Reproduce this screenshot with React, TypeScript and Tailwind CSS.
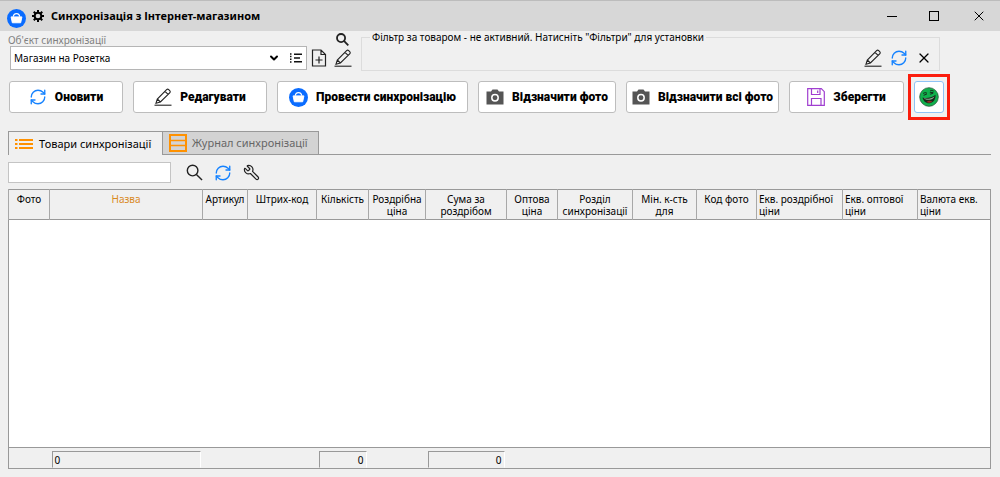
import type { ReactNode } from 'react';
import { ChevronDown, RefreshCw, Wrench, X } from 'lucide-react';

type Column = { title: string; width: string; align?: string; sum?: string };

const columns: Column[] = [
  { title: 'Фото', width: 'w-[41px]' },
  { title: 'Назва', width: '', align: 'text-center text-[#d98a1f]', sum: '0' },
  { title: 'Артикул', width: 'w-[45px]' },
  { title: 'Штрих-код', width: 'w-[69px]' },
  { title: 'Кількість', width: 'w-[52px]', sum: '0' },
  { title: 'Роздрібна ціна', width: 'w-[57px]' },
  { title: 'Сума за роздрібом', width: 'w-[81px]', sum: '0' },
  { title: 'Оптова ціна', width: 'w-[51px]' },
  { title: 'Розділ синхронізації', width: 'w-[75px]' },
  { title: 'Мін. к-сть для', width: 'w-[64px]' },
  { title: 'Код фото', width: 'w-[60px]' },
  { title: 'Екв. роздрібної ціни', width: 'w-[86px]', align: 'text-left' },
  { title: 'Екв. оптової ціни', width: 'w-[75px]', align: 'text-left' },
  { title: 'Валюта екв. ціни', width: 'w-[73px]', align: 'text-left' },
];

function BagIcon({ className }: { className: string }) {
  return (
    <svg viewBox="0 0 20 20" className={className}>
      <circle cx="10" cy="10" r="10" fill="#0a6cff" />
      <path d="M4.3 8.3h11.4l-1.3 6.2H5.6z" fill="#fff" stroke="#fff" strokeLinejoin="round" />
      <path d="M6.6 8.2C6.8 5.6 8 4.8 10 4.8s3.2.8 3.4 3.4" fill="none" stroke="#fff" strokeWidth="1.3" />
    </svg>
  );
}

function GearIcon() {
  return (
    <svg viewBox="0 0 24 24" className="h-3 w-3" fill="none" stroke="#000">
      <circle cx="12" cy="12" r="6.7" strokeWidth="4" />
      <path
        d="M12 0v5M12 19v5M0 12h5M19 12h5M3.5 3.5 7 7M17 17l3.5 3.5M20.5 3.5 17 7M7 17l-3.5 3.5"
        strokeWidth="4"
      />
    </svg>
  );
}

function SearchIcon({ className }: { className: string }) {
  return (
    <svg viewBox="0 0 18 18" className={className} fill="none" stroke="#222">
      <circle cx="7" cy="7" r="5.6" />
      <path d="m11 11 6 6" />
    </svg>
  );
}

function PencilIcon() {
  return (
    <svg viewBox="0 0 18 18" className="h-[18px] w-[18px]" fill="none" stroke="#222" strokeWidth="1.1">
      <path d="M2 15.2 3.3 11 12.6 1.7c.7-.7 1.4-.7 2.1 0l1 1c.7.7.7 1.4 0 2.1L6.4 14zM3.3 11l3.1 3M11 3.3l3.1 3.1" />
      <path d="M.5 17.2h17" />
    </svg>
  );
}

function FilePlusIcon() {
  return (
    <svg viewBox="0 0 16 18" className="h-[18px] w-4" fill="none" stroke="#222" strokeWidth="1.2">
      <path d="M1.5 1H10l4.5 4.5V17h-13zM10 1v4.5h4.5M8 7.5v7M4.5 11h7" />
    </svg>
  );
}

function ListIcon() {
  return (
    <svg viewBox="0 0 18 12" className="h-3 w-[18px]" fill="none" stroke="#ff9100" strokeWidth="2">
      <path d="M0 2h2.5M0 6h2.5M0 10h2.5M4 2h14M4 6h14M4 10h14" />
    </svg>
  );
}

function DetailsIcon() {
  return (
    <svg viewBox="0 0 12 10" className="h-[10px] w-3" fill="none" stroke="#111" strokeWidth="1.5">
      <path d="M0 1h1.5M0 3.6h1.5M0 6.2h1.5M0 8.9h1.5M4 1.2h8M4 4.9h6M4 8.7h8" />
    </svg>
  );
}

function CameraIcon() {
  return (
    <svg viewBox="0 0 18 16" className="h-4 w-[18px]">
      <path d="M1 2.5h4L6.5.5h5L13 2.5h4.5v13H.5v-13z" fill="#555" />
      <circle cx="9" cy="8.8" r="3.2" fill="none" stroke="#fff" strokeWidth="1.5" />
    </svg>
  );
}

function SaveIcon() {
  return (
    <svg viewBox="0 0 18 18" className="h-[18px] w-[18px]" fill="none" stroke="#a03fd0" strokeWidth="1.2">
      <path d="M.7.7h13.6l3 3v13.6H.7zM4.5.7v5.8H13V.7M4.500 17.300v-6.800H14v6.800M10.700 2.500V5" />
    </svg>
  );
}

function LaughIcon() {
  return (
    <svg viewBox="0 0 20 20" className="h-5 w-5 shrink-0">
      <circle cx="10" cy="10" r="9.3" fill="#10b04c" stroke="#2c5b3b" strokeWidth=".8" />
      <path d="M3.5 10.500c4 1.200 9 .3 13-2.700.3 4.500-2 8-5.800 8.400-3.700.4-6.400-2-7.200-5.700z" fill="#16281b" />
      <path d="M4.800 11.300c3.700.9 7.500.2 10.800-1.900-.8 1.900-2.800 3-5.300 3.300-2.500.3-4.500-.2-5.500-1.400z" fill="#8fae95" />
      <path d="M7.500 15c1.500-1.400 4-1.700 5.800-.6-1.500 1.400-4 1.700-5.800.6z" fill="#8f2d24" />
      <path
        d="M4 6.800c.8-1.200 2.700-1.500 4-.5M4.600 8.300l3.200-1.200M10.800 5.800l3.400-.5M11 4.200c1-.9 2.400-1 3.600-.2M11.300 7.300l3-1.300"
        fill="none"
        stroke="#16281b"
      />
    </svg>
  );
}

function LogIcon() {
  return (
    <svg viewBox="0 0 18 18" className="h-[18px] w-[18px]" fill="none" stroke="#ff9100">
      <path d="M1 1h16v16H1z" strokeWidth="2" />
      <path d="M2 6.5h14M2 11.5h14" strokeWidth="1.5" />
    </svg>
  );
}

function ToolButton({ width, icon, children }: { width: string; icon: ReactNode; children: ReactNode }) {
  return (
    <button
      className={`flex h-8 items-center justify-center gap-2 rounded-[3px] border border-[#bdbdbd] bg-white font-[Roboto,sans-serif] text-[12px] font-black whitespace-nowrap ${width}`}
    >
      {icon}
      {children}
    </button>
  );
}

function IconButton({ label, children }: { label: string; children: ReactNode }) {
  return (
    <button aria-label={label} className="flex shrink-0 items-center justify-center">
      {children}
    </button>
  );
}

export default function App() {
  return (
    <div className="flex h-screen flex-col bg-[#f0f0f0] font-['Noto_Sans',sans-serif] text-[10px] leading-3 text-black">
      <header className="flex h-[31px] shrink-0 items-center border-t border-[#bcbcbc] bg-[#d7d7d7] pl-[7px]">
        <BagIcon className="mt-1 h-[19px] w-[19px]" />
        <span className="ml-[6px]">
          <GearIcon />
        </span>
        <h1 className="ml-[7px] flex-1 text-[11px] font-bold">Синхронізація з Інтернет-магазином</h1>
        <div className="flex items-center gap-8 pr-[13px]">
          <button aria-label="Згорнути" className="w-[10px] border-t border-black" />
          <button aria-label="Розгорнути" className="h-[10px] w-[10px] border border-black" />
          <IconButton label="Закрити">
            <X className="h-4 w-4" strokeWidth={1.5} />
          </IconButton>
        </div>
      </header>

      <div className="flex shrink-0 pl-2">
        <div className="w-[344px] pt-[2px]">
          <div className="flex items-center justify-between pr-[3px]">
            <label htmlFor="sync-object" className="text-[#808080]">
              Об'єкт синхронізації
            </label>
            <IconButton label="Пошук">
              <SearchIcon className="h-[13px] w-[13px] stroke-[2.500]" />
            </IconButton>
          </div>
          <div className="flex items-center pl-[2px]">
            <div className="flex h-6 flex-1 items-center border border-[#b5b5b5] bg-white pr-1">
              <select id="sync-object" className="flex-1 appearance-none pl-[3px] outline-none">
                <option>Магазин на Розетка</option>
              </select>
              <ChevronDown className="pointer-events-none mr-[10px] h-3 w-3" strokeWidth={4} />
              <IconButton label="Список">
                <DetailsIcon />
              </IconButton>
            </div>
            <div className="ml-1 flex gap-[7px]">
              <IconButton label="Додати">
                <FilePlusIcon />
              </IconButton>
              <IconButton label="Змінити">
                <PencilIcon />
              </IconButton>
            </div>
          </div>
        </div>
        <fieldset className="mr-[60px] ml-[9px] h-10 flex-1 border border-[#dcdcdc]">
          <legend className="ml-2 px-[2px]">Фільтр за товаром - не активний. Натисніть "Фільтри" для установки</legend>
          <div className="flex items-center justify-end gap-2 pt-[6px] pr-[7px]">
            <IconButton label="Фільтри">
              <PencilIcon />
            </IconButton>
            <IconButton label="Оновити фільтр">
              <RefreshCw className="h-[18px] w-[18px] text-[#1683ff]" strokeWidth={1.8} />
            </IconButton>
            <IconButton label="Скинути фільтр">
              <X className="h-4 w-4" strokeWidth={1.8} />
            </IconButton>
          </div>
        </fieldset>
      </div>

      <div className="flex shrink-0 items-center gap-[10px] pt-[3px] pl-[9px]">
        <ToolButton width="w-[114px]" icon={<RefreshCw className="h-[18px] w-[18px] text-[#1683ff]" strokeWidth={1.8} />}>
          Оновити
        </ToolButton>
        <ToolButton width="w-[134px]" icon={<PencilIcon />}>
          Редагувати
        </ToolButton>
        <ToolButton width="w-[191px]" icon={<BagIcon className="h-[19px] w-[19px]" />}>
          Провести синхронізацію
        </ToolButton>
        <ToolButton width="w-[138px]" icon={<CameraIcon />}>
          Відзначити фото
        </ToolButton>
        <ToolButton width="w-[153px]" icon={<CameraIcon />}>
          Відзначити всі фото
        </ToolButton>
        <ToolButton width="w-[115px]" icon={<SaveIcon />}>
          Зберегти
        </ToolButton>
        <div className="-ml-[6px] flex h-[46px] w-[42px] items-center justify-center border-[3px] border-[#fb1d0d]">
          <button
            aria-label="Смайл"
            className="flex h-8 w-[30px] items-center justify-center rounded-[3px] border border-[#8fc3f5] bg-white"
          >
            <LaughIcon />
          </button>
        </div>
      </div>

      <div role="tablist" className="mt-[11px] mr-[9px] ml-2 flex h-6 shrink-0 text-[11px] whitespace-nowrap">
        <button
          role="tab"
          aria-selected="true"
          className="flex w-[154px] items-center gap-[6px] border-t border-l border-[#999] pl-[6px]"
        >
          <ListIcon />
          Товари синхронізації
        </button>
        <button
          role="tab"
          aria-selected="false"
          className="flex w-[157px] items-center gap-[5px] border border-[#999] bg-[#d3d3d3] pl-[6px] text-[#666]"
        >
          <LogIcon />
          Журнал синхронізації
        </button>
        <div className="flex-1 border-b border-[#999]" />
      </div>

      <div className="flex shrink-0 items-center pt-[7px] pb-[6px] pl-2">
        <input aria-label="Пошук товару" className="h-[21px] w-[163px] border border-[#c4c4c4] bg-white px-1 outline-none" />
        <div className="ml-[15px] flex items-center gap-[11px]">
          <IconButton label="Знайти">
            <SearchIcon className="h-[17px] w-[17px] stroke-[1.500]" />
          </IconButton>
          <IconButton label="Оновити список">
            <RefreshCw className="h-[18px] w-[18px] text-[#1683ff]" strokeWidth={1.8} />
          </IconButton>
          <IconButton label="Налаштування">
            <Wrench className="h-[17px] w-[17px] -scale-x-100 text-[#222]" strokeWidth={1.7} />
          </IconButton>
        </div>
      </div>

      <main className="mr-[9px] mb-2 ml-2 min-h-0 flex-1">
        <table className="h-full w-full table-fixed border-collapse border border-[#999] bg-white">
          <thead>
            <tr className="h-[30px] border-b border-[#999] bg-[#f0f0f0]">
              {columns.map((col) => (
                <th
                  key={col.title}
                  className={`border-l border-[#a8a8a8] px-[2px] pt-[3px] align-top font-normal ${col.width} ${col.align ?? 'text-center'}`}
                >
                  {col.title}
                </th>
              ))}
            </tr>
          </thead>
          <tbody>
            <tr>
              <td colSpan={columns.length} />
            </tr>
          </tbody>
          <tfoot>
            <tr className="h-[21px] border-t border-[#999] bg-[#f0f0f0]">
              {columns.map((col, i) => (
                <td key={col.title} className="px-[2px] pt-[2px] pb-0">
                  {col.sum && (
                    <div
                      className={`h-[17px] border border-t-[#999] border-r-white border-b-transparent border-l-[#999] px-[2px] pt-[2px] ${i === 1 ? 'text-left' : 'text-right'}`}
                    >
                      {col.sum}
                    </div>
                  )}
                </td>
              ))}
            </tr>
          </tfoot>
        </table>
      </main>
    </div>
  );
}
